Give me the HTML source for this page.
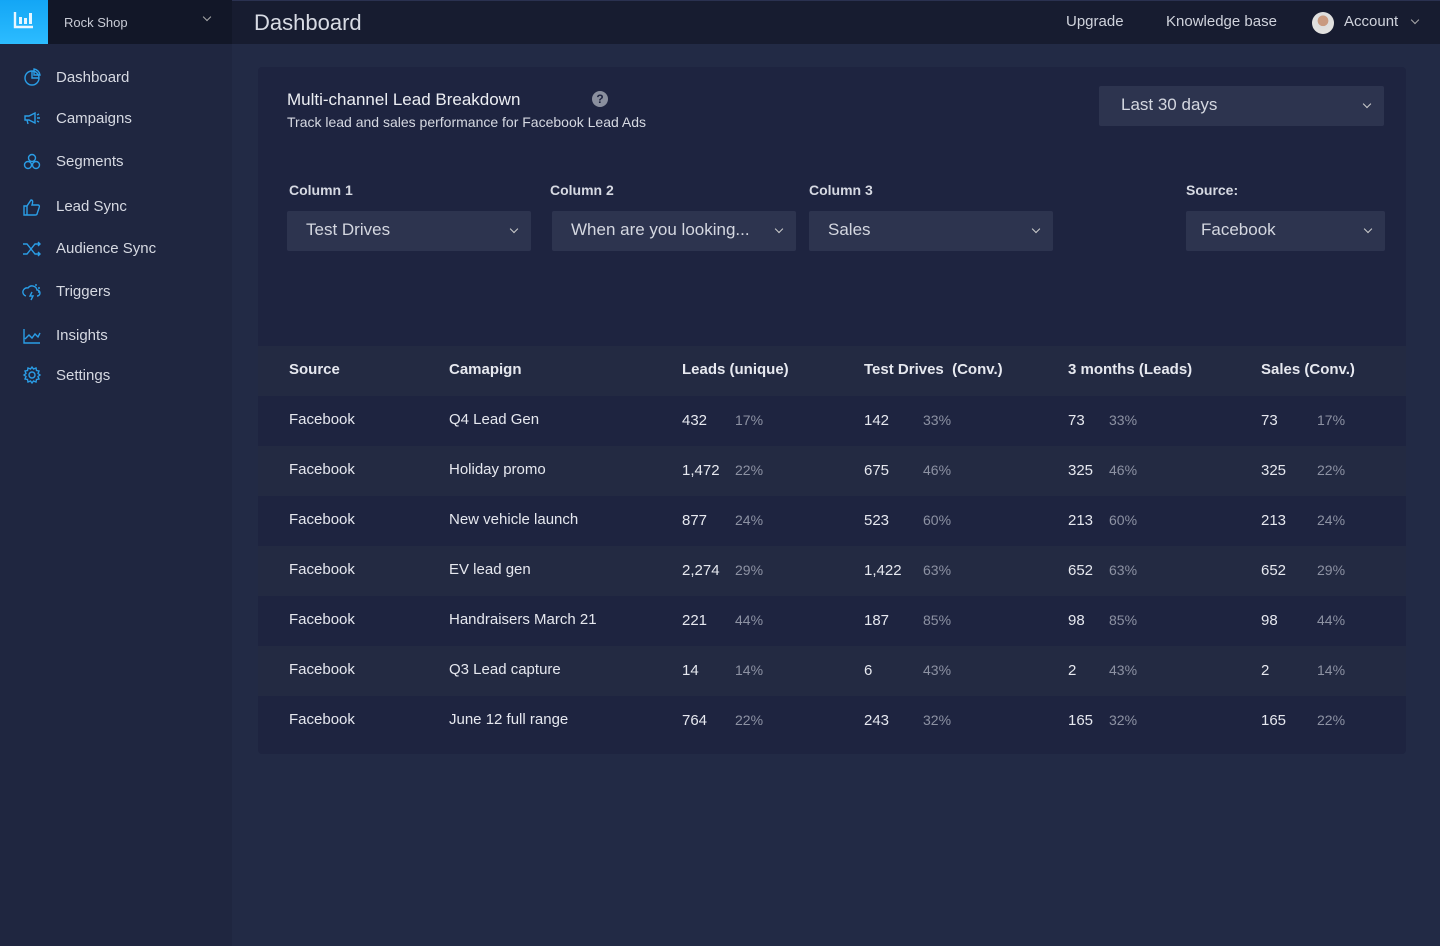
<!DOCTYPE html>
<html><head><meta charset="utf-8"><style>
*{box-sizing:border-box;margin:0;padding:0}
body{width:1440px;height:946px;background:#222a45;font-family:"Liberation Sans",sans-serif;color:#e6e8ef;position:relative;overflow:hidden}
.logo{position:absolute;left:0;top:0;width:48px;height:44px;background:linear-gradient(180deg,#13a6f5,#2cbcff);}
.shop{position:absolute;left:48px;top:0;width:184px;height:44px;background:#121728;font-size:13px;color:#c9ccd6;padding:15px 0 0 16px}
.side{position:absolute;left:0;top:44px;width:232px;height:902px;background:#1f2640}
.top{position:absolute;left:232px;top:0;width:1208px;height:44px;background:#171c30;border-top:1px solid #2a3150}
.top h1{font-weight:normal;font-size:22px;color:#d8dbe4;position:absolute;left:22px;top:9px}
.top span{position:absolute;top:12px;font-size:15px;color:#d0d3dc}
.nav{position:absolute;left:56px;font-size:15px;color:#d6d9e2}
.ic{position:absolute;left:22px;width:20px;height:20px}
.card{position:absolute;left:258px;top:67px;width:1148px;height:687px;background:#1e2440;border-radius:4px}
.sel{position:absolute;height:40px;background:#2d344f;border-radius:2px;font-size:17px;color:#d4d7e0;padding:9px 0 0 19px}
.sel:after{content:"";position:absolute;right:14px;top:15px;width:5px;height:5px;border-right:1.5px solid #ccc;border-bottom:1.5px solid #ccc;transform:rotate(45deg)}
.lbl{position:absolute;top:115px;font-size:14px;font-weight:bold;color:#d6d9e2}
.row{position:absolute;left:0;width:1148px;height:50px;font-size:15px}
.row div{position:absolute;top:15px}
.row .p{color:#8d92a3;font-size:14px}
.hd{font-weight:bold;font-size:15px}
</style></head><body>
<div class="logo"><svg width="48" height="44" viewBox="0 0 48 44"><path d="M15 12v15h18" stroke="#e8f6ff" stroke-width="2.4" fill="none"/><rect x="19" y="17" width="3" height="7" fill="#e8f6ff"/><rect x="24" y="18" width="3" height="6" fill="#e8f6ff"/><rect x="29" y="13" width="3" height="11" fill="#e8f6ff"/></svg></div>
<div class="shop">Rock Shop<span style="position:absolute;left:156px;top:14px;width:6px;height:6px;border-right:1.5px solid #aaa;border-bottom:1.5px solid #aaa;transform:rotate(45deg)"></span></div>
<div class="side">
<svg class="ic" style="top:23px" viewBox="0 0 20 20" fill="none" stroke="#2a9de6" stroke-width="1.4"><circle cx="10" cy="11" r="7"/><path d="M10 4v7h7M12 2a7 7 0 0 1 6 6h-6z"/></svg>
<div class="nav" style="top:25px">Dashboard</div>
<svg class="ic" style="top:64px" viewBox="0 0 20 20" fill="none" stroke="#2a9de6" stroke-width="1.4"><path d="M3 8h4l6-3v10l-6-3H3zM5 12l1 4M15 7l2-1M15 10h3M15 13l2 1"/></svg>
<div class="nav" style="top:66px">Campaigns</div>
<svg class="ic" style="top:108px" viewBox="0 0 20 20" fill="none" stroke="#2a9de6" stroke-width="1.4"><circle cx="10" cy="6" r="3.5"/><circle cx="6" cy="13" r="3.5"/><circle cx="14" cy="13" r="3.5"/></svg>
<div class="nav" style="top:109px">Segments</div>
<svg class="ic" style="top:153px" viewBox="0 0 20 20" fill="none" stroke="#2a9de6" stroke-width="1.4"><path d="M2 9h3v9H2zM5 9l4-6c2 0 2 2 1 5h6c1 0 2 1 1 3l-2 6c0 1-1 1-2 1H5"/></svg>
<div class="nav" style="top:154px">Lead Sync</div>
<svg class="ic" style="top:195px" viewBox="0 0 20 20" fill="none" stroke="#2a9de6" stroke-width="1.4"><path d="M1 5h4l8 10h5M1 15h4l8-10h5M16 3l2 2-2 2M16 13l2 2-2 2"/></svg>
<div class="nav" style="top:196px">Audience Sync</div>
<svg class="ic" style="top:238px" viewBox="0 0 20 20" fill="none" stroke="#2a9de6" stroke-width="1.4"><path d="M4 14a4 4 0 0 1 2-8 5 5 0 0 1 9 2 3 3 0 0 1 0 6M10 10l-2 4h3l-2 4M14 2v2M18 6h-2M18 10h-2"/></svg>
<div class="nav" style="top:239px">Triggers</div>
<svg class="ic" style="top:282px" viewBox="0 0 20 20" fill="none" stroke="#2a9de6" stroke-width="1.4"><path d="M2 3v14h16M3 13l4-4 3 3 3-4 3 3 2-4"/></svg>
<div class="nav" style="top:283px">Insights</div>
<svg class="ic" style="top:321px" viewBox="0 0 20 20" fill="none" stroke="#2a9de6" stroke-width="1.4"><circle cx="10" cy="10" r="3"/><path d="M10 2l1.5 2 2.5-1 .5 2.5 2.5.5-1 2.5 2 1.5-2 1.5 1 2.5-2.5.5-.5 2.5-2.5-1L10 18l-1.5-2-2.5 1-.5-2.5L3 14l1-2.5L2 10l2-1.5L3 6l2.5-.5L6 3l2.5 1z"/></svg>
<div class="nav" style="top:323px">Settings</div>
</div>
<div class="top"><h1>Dashboard</h1>
<span style="left:834px">Upgrade</span><span style="left:934px">Knowledge base</span>
<div style="position:absolute;left:1080px;top:11px;width:22px;height:22px;border-radius:50%;background:radial-gradient(circle at 50% 40%,#c99a80 30%,#ddd 32%,#e8e6e2)"></div>
<span style="left:1112px">Account</span>
<div style="position:absolute;left:1180px;top:16px;width:6px;height:6px;border-right:1.5px solid #aaa;border-bottom:1.5px solid #aaa;transform:rotate(45deg)"></div>
</div>
<div class="card">
<div style="position:absolute;left:29px;top:23px;font-size:17px;color:#eceef3">Multi-channel Lead Breakdown</div>
<div style="position:absolute;left:334px;top:24px;width:16px;height:16px;border-radius:50%;background:#8a8f9e;color:#1e2440;font-size:12px;font-weight:bold;text-align:center;line-height:16px">?</div>
<div style="position:absolute;left:29px;top:47px;font-size:14px;color:#d6d9e2">Track lead and sales performance for Facebook Lead Ads</div>
<div class="sel" style="left:841px;top:19px;width:285px;padding-left:22px">Last 30 days</div>
<div class="lbl" style="left:31px">Column 1</div><div class="lbl" style="left:292px">Column 2</div><div class="lbl" style="left:551px">Column 3</div><div class="lbl" style="left:928px">Source:</div>
<div class="sel" style="left:29px;top:144px;width:244px">Test Drives</div>
<div class="sel" style="left:294px;top:144px;width:244px">When are you looking...</div>
<div class="sel" style="left:551px;top:144px;width:244px">Sales</div>
<div class="sel" style="left:928px;top:144px;width:199px;padding-left:15px">Facebook</div>
<div class="row hd" style="top:279px;height:50px;background:#232a42"><div style="left:31px">Source</div><div style="left:191px">Camapign</div><div style="left:424px">Leads (unique)</div><div style="left:606px">Test Drives &nbsp;(Conv.)</div><div style="left:810px">3 months (Leads)</div><div style="left:1003px">Sales (Conv.)</div></div>
<div id="rows"></div>
</div>
<script>
var d=[["Q4 Lead Gen","432","17%","142","33%","73","33%","73","17%"],["Holiday promo","1,472","22%","675","46%","325","46%","325","22%"],["New vehicle launch","877","24%","523","60%","213","60%","213","24%"],["EV lead gen","2,274","29%","1,422","63%","652","63%","652","29%"],["Handraisers March 21","221","44%","187","85%","98","85%","98","44%"],["Q3 Lead capture","14","14%","6","43%","2","43%","2","14%"],["June 12 full range","764","22%","243","32%","165","32%","165","22%"]];
var h="";d.forEach(function(r,i){h+='<div class="row" style="top:'+(329+i*50)+'px;background:'+(i%2?'#232a42':'#1e2440')+'"><div style="left:31px">Facebook</div><div style="left:191px">'+r[0]+'</div><div style="left:424px;top:16px">'+r[1]+'</div><div class="p" style="left:477px;top:16px">'+r[2]+'</div><div style="left:606px;top:16px">'+r[3]+'</div><div class="p" style="left:665px;top:16px">'+r[4]+'</div><div style="left:810px;top:16px">'+r[5]+'</div><div class="p" style="left:851px;top:16px">'+r[6]+'</div><div style="left:1003px;top:16px">'+r[7]+'</div><div class="p" style="left:1059px;top:16px">'+r[8]+'</div></div>'});
document.getElementById("rows").innerHTML=h;
</script>
</body></html>
